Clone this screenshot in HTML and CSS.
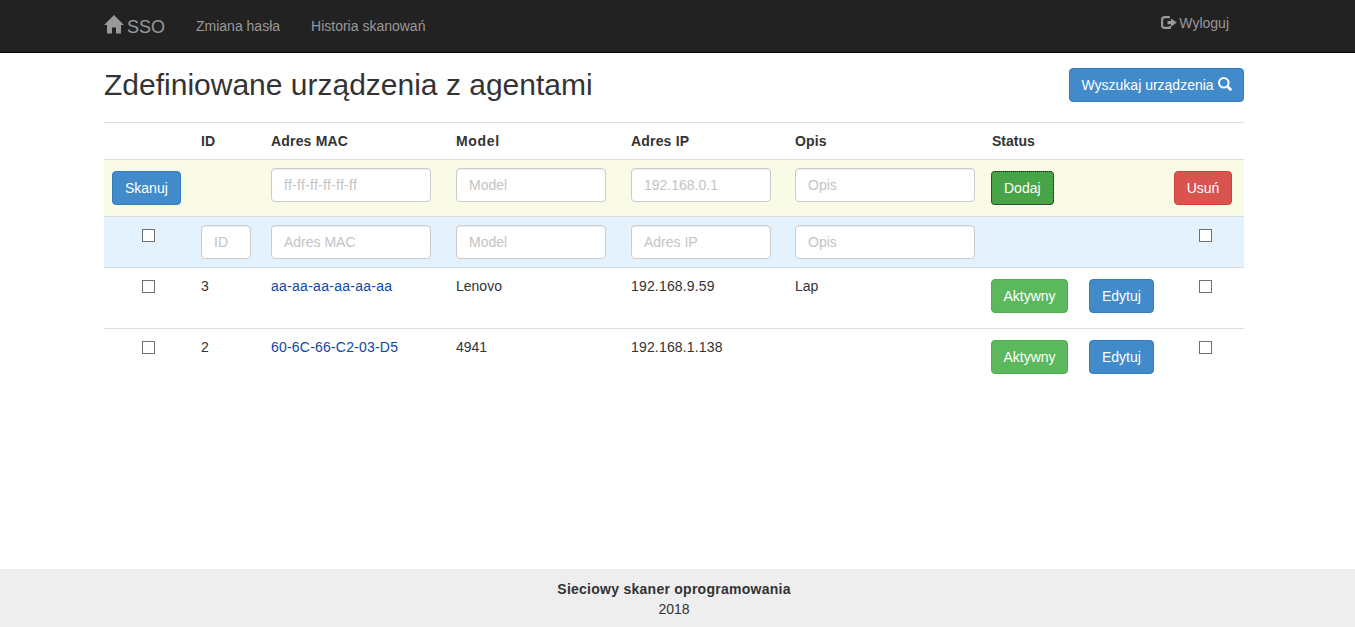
FILE: index.html
```html
<!DOCTYPE html>
<html lang="pl">
<head>
<meta charset="utf-8">
<title>SSO</title>
<link rel="stylesheet" href="styles.css">
</head>
<body>
<nav class="navbar">
  <div class="container navbar-inner">
    <a class="brand">
      <svg class="icon-home" viewBox="0 0 20 19"><path d="M10 0 20 10H17V18.5H12V12.5H8V18.5H3V10H0Z"/></svg>
      <span>SSO</span>
    </a>
    <a class="nav-link">Zmiana hasła</a>
    <a class="nav-link">Historia skanowań</a>
    <a class="logout">
      <svg class="icon-logout" viewBox="0 0 16 13"><path class="door" d="M8.8 1.1H3.8Q1.1 1.1 1.1 3.8V9.2Q1.1 11.9 3.8 11.9H8.8V10"/><path d="M6.5 4.9H10V2.4L15.8 6.6 10 10.8V8.3H6.5Z"/></svg>
      <span>Wyloguj</span>
    </a>
  </div>
</nav>
<main class="container">
  <header class="page-head">
    <h1>Zdefiniowane urządzenia z agentami</h1>
    <button class="btn primary search">Wyszukaj urządzenia <svg class="icon-search" viewBox="0 0 14 14"><circle cx="5.8" cy="5.8" r="4.8"/><path d="M9.2 9.2 13.2 13.2"/></svg></button>
  </header>
  <table class="devices">
    <colgroup><col class="c-scan"><col class="c-id"><col class="c-mac"><col class="c-model"><col class="c-ip"><col class="c-desc"><col class="c-status"><col class="c-edit"><col class="c-del"></colgroup>
    <tr class="head-row"><th></th><th>ID</th><th>Adres MAC</th><th class="wide">Model</th><th>Adres IP</th><th>Opis</th><th class="status">Status</th><th></th><th></th></tr>
    <tr class="add-row">
      <td><button class="btn primary">Skanuj</button></td>
      <td></td>
      <td><input class="field w-mac loose" placeholder="ff-ff-ff-ff-ff-ff"></td>
      <td><input class="field w-model" placeholder="Model"></td>
      <td><input class="field w-ip" placeholder="192.168.0.1"></td>
      <td><input class="field w-desc" placeholder="Opis"></td>
      <td><button class="btn success focused">Dodaj</button></td>
      <td></td>
      <td><button class="btn danger">Usuń</button></td>
    </tr>
    <tr class="filter-row">
      <td class="check"><input type="checkbox"></td>
      <td><input class="field w-id" placeholder="ID"></td>
      <td><input class="field w-mac" placeholder="Adres MAC"></td>
      <td><input class="field w-model" placeholder="Model"></td>
      <td><input class="field w-ip" placeholder="Adres IP"></td>
      <td><input class="field w-desc" placeholder="Opis"></td>
      <td></td>
      <td></td>
      <td class="check"><input type="checkbox"></td>
    </tr>
    <tr class="data-row">
      <td class="check"><input type="checkbox"></td>
      <td>3</td>
      <td><a class="mac loose">aa-aa-aa-aa-aa-aa</a></td>
      <td>Lenovo</td>
      <td class="ip">192.168.9.59</td>
      <td>Lap</td>
      <td><button class="btn success active">Aktywny</button></td>
      <td><button class="btn primary">Edytuj</button></td>
      <td class="check"><input type="checkbox"></td>
    </tr>
    <tr class="data-row">
      <td class="check"><input type="checkbox"></td>
      <td>2</td>
      <td><a class="mac">60-6C-66-C2-03-D5</a></td>
      <td>4941</td>
      <td class="ip">192.168.1.138</td>
      <td></td>
      <td><button class="btn success active">Aktywny</button></td>
      <td><button class="btn primary">Edytuj</button></td>
      <td class="check"><input type="checkbox"></td>
    </tr>
  </table>
</main>
<footer class="footer">
  <strong>Sieciowy skaner oprogramowania</strong>
  <span>2018</span>
</footer>
</body>
</html>
```
FILE: styles.css
```css
* { box-sizing: border-box; }
body {
  margin: 0;
  min-height: 627px;
  display: flex;
  flex-direction: column;
  background: #fff;
  color: #333;
  font: 14px/20px "Liberation Sans", Arial, sans-serif;
}
.container { width: 1140px; margin-left: 104px; }
.navbar { height: 53px; background: #222; border-bottom: 1px solid #080808; color: #999; }
.navbar-inner { display: flex; align-items: flex-start; }
.brand { display: flex; width: 76px; padding-top: 17px; font-size: 18px; gap: 3px; }
.icon-home { width: 20px; height: 19px; margin-top: -2px; fill: #999; }
.nav-link { padding: 16px 15px 0 16px; }
.logout { display: flex; gap: 2px; margin: 13px 15px 0 auto; }
.icon-logout { width: 16px; height: 13px; margin-top: 3px; fill: #999; }
.icon-logout .door { fill: none; stroke: #999; stroke-width: 2.1; }

.page-head { display: flex; justify-content: space-between; height: 69px; padding-top: 15px; }
h1 { margin: 0; font-size: 30px; font-weight: 400; line-height: 33px; }
.btn {
  display: block;
  height: 34px;
  padding: 0 12px;
  border: 1px solid;
  border-radius: 4px;
  color: #fff;
  font: inherit;
  white-space: nowrap;
}
.primary { background: #428bca; border-color: #357ebd; }
.success { background: #5cb85c; border-color: #4cae4c; }
.danger { width: 58px; background: #d9534f; border-color: #d43f3a; }
.search { width: 175px; }
.active { width: 77px; }
.search, .danger, .active { padding: 0; }
.focused { background: #47a447; border-color: #398439; outline: 1px dotted #222; outline-offset: -1px; }
.icon-search { width: 14px; height: 14px; vertical-align: -1px; fill: none; stroke: #fff; stroke-width: 2; }
.icon-search path { stroke-width: 2.7; }

.devices { width: 1140px; table-layout: fixed; border-collapse: separate; border-spacing: 0; }
.devices th, .devices td { padding: 8px; border-top: 1px solid #ddd; text-align: left; vertical-align: top; }
.devices th { letter-spacing: .18px; }
.devices th.wide { letter-spacing: .65px; }
.devices th.status { padding-left: 9px; letter-spacing: 0; }
.c-scan { width: 89px; }
.c-id { width: 70px; }
.c-mac { width: 185px; }
.c-model { width: 175px; }
.c-ip { width: 164px; }
.c-desc { width: 196px; }
.c-status { width: 98px; }
.c-edit { width: 85px; }
.c-del { width: 78px; }
.add-row { height: 57px; background: #f9fbe7; }
.filter-row { height: 51px; background: #e3f2fd; }
.data-row { height: 61px; }
.devices .btn { margin-top: 3px; }
.field {
  display: block;
  height: 34px;
  padding: 0 12px 1px;
  border: 1px solid #ccc;
  border-radius: 4px;
  background: #fff;
  box-shadow: inset 0 1px 1px rgba(0, 0, 0, .075);
  font: inherit;
}
.field::placeholder { color: #c4c4c4; opacity: 1; }
.w-id { width: 50px; }
.w-mac { width: 160px; }
.w-model { width: 150px; }
.w-ip { width: 140px; }
.w-desc { width: 180px; }
.check input {
  appearance: none;
  display: block;
  width: 13px;
  height: 13px;
  margin: 4px auto 0;
  border: 1px solid #707070;
  background: #fff;
}
.mac { color: #0d47a1; letter-spacing: .2px; }
.loose { letter-spacing: .27px; }
.ip { letter-spacing: .17px; }
.footer {
  display: flex;
  flex-direction: column;
  align-items: center;
  height: 58px;
  margin-top: auto;
  padding: 10px 7px 0 0;
  background: #eee;
}
.footer strong { letter-spacing: .26px; }
```
